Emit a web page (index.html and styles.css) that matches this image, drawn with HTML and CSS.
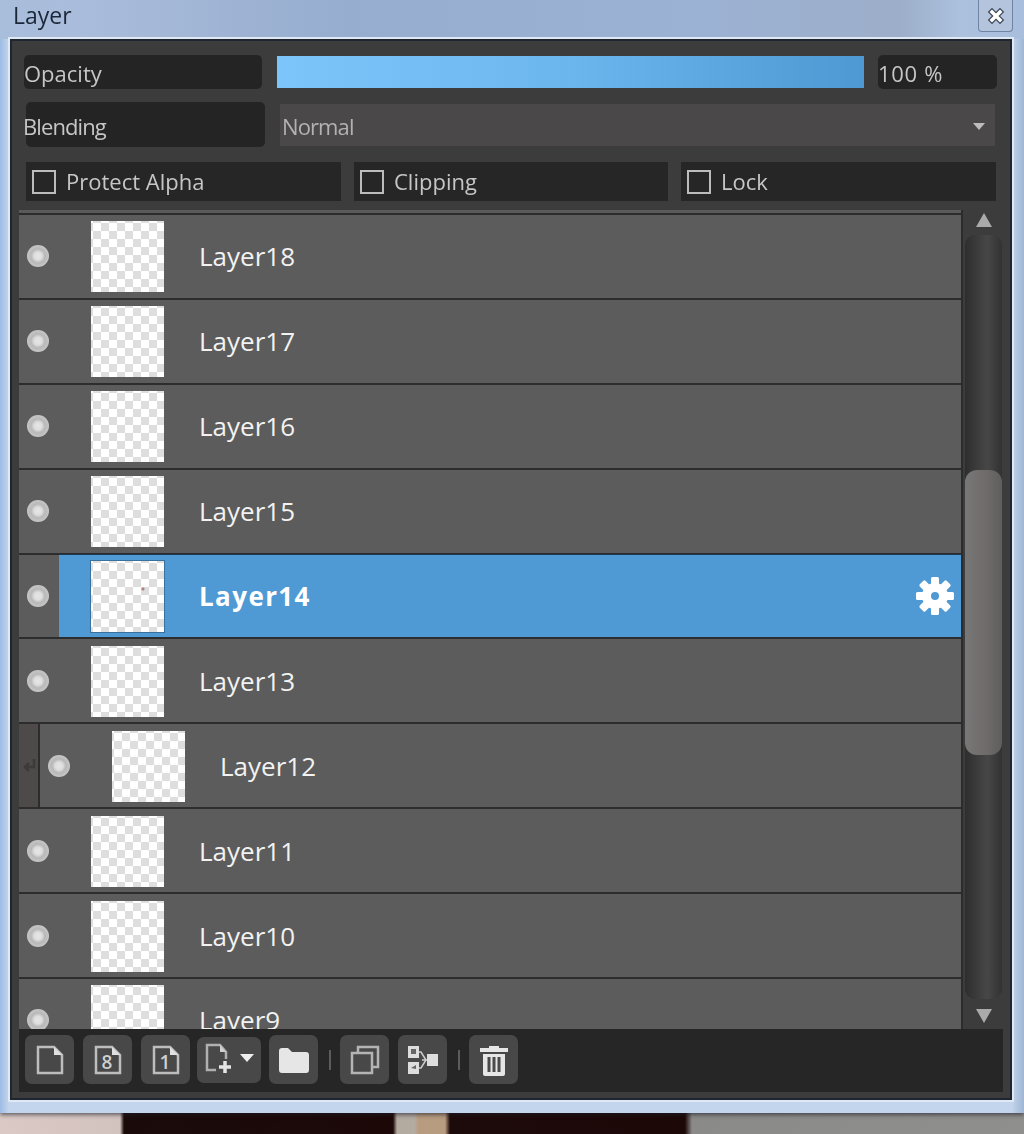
FILE: index.html
```html
<!DOCTYPE html>
<html lang="en">
<head>
<meta charset="utf-8">
<title>Layer</title>
<link rel="stylesheet" href="styles.css">
</head>
<body>
<div class="window">
  <header class="titlebar">
    <span class="title">Layer</span>
    <button class="close" aria-label="Close">
      <svg width="18" height="18" viewBox="0 0 18 18"><path d="M5 5l8 8M13 5l-8 8" stroke="#3b4658" stroke-width="6" stroke-linecap="square"/><path d="M5 5l8 8M13 5l-8 8" stroke="#fff" stroke-width="3.500" stroke-linecap="square"/></svg>
    </button>
  </header>
  <main class="panel">
    <section class="controls">
      <div class="row-opacity">
        <div class="label">Opacity</div>
        <div class="slider"></div>
        <div class="label value">100 %</div>
      </div>
      <div class="row-blending">
        <div class="label label-tight">Blending</div>
        <div class="select"><span>Normal</span><i class="caret"></i></div>
      </div>
      <div class="row-checks">
        <label class="check"><i class="box"></i>Protect Alpha</label>
        <label class="check"><i class="box"></i>Clipping</label>
        <label class="check"><i class="box"></i>Lock</label>
      </div>
    </section>
    <section class="stack">
      <div class="list">
        <div class="row-cut"></div>
        <div class="row"><div class="eye-cell"><i class="eye"></i></div><div class="body"><i class="thumb"></i><span class="name">Layer18</span></div></div>
        <div class="row"><div class="eye-cell"><i class="eye"></i></div><div class="body"><i class="thumb"></i><span class="name">Layer17</span></div></div>
        <div class="row"><div class="eye-cell"><i class="eye"></i></div><div class="body"><i class="thumb"></i><span class="name">Layer16</span></div></div>
        <div class="row"><div class="eye-cell"><i class="eye"></i></div><div class="body"><i class="thumb"></i><span class="name">Layer15</span></div></div>
        <div class="row selected"><div class="eye-cell"><i class="eye"></i></div><div class="body"><i class="thumb thumb-dot"></i><span class="name">Layer14</span>
          <svg class="gear" width="40" height="40" viewBox="0 0 40 40"><g fill="#fff"><circle cx="20" cy="20" r="13"/><rect x="16" y="1" width="8" height="38" rx="1.5"/><rect x="16" y="1" width="8" height="38" rx="1.5" transform="rotate(45 20 20)"/><rect x="16" y="1" width="8" height="38" rx="1.5" transform="rotate(90 20 20)"/><rect x="16" y="1" width="8" height="38" rx="1.5" transform="rotate(135 20 20)"/></g><circle cx="20" cy="20" r="4" fill="#4f9ad4"/></svg>
        </div></div>
        <div class="row"><div class="eye-cell"><i class="eye"></i></div><div class="body"><i class="thumb"></i><span class="name">Layer13</span></div></div>
        <div class="row"><div class="indent"><svg width="16" height="18" viewBox="0 0 16 18"><path d="M13 2v8H5M8 6l-4 4 4 4" fill="none" stroke="#3f3a3a" stroke-width="2.500"/></svg></div><div class="eye-cell"><i class="eye"></i></div><div class="body"><i class="thumb"></i><span class="name">Layer12</span></div></div>
        <div class="row"><div class="eye-cell"><i class="eye"></i></div><div class="body"><i class="thumb"></i><span class="name">Layer11</span></div></div>
        <div class="row"><div class="eye-cell"><i class="eye"></i></div><div class="body"><i class="thumb"></i><span class="name">Layer10</span></div></div>
        <div class="row"><div class="eye-cell"><i class="eye"></i></div><div class="body"><i class="thumb"></i><span class="name">Layer9</span></div></div>
      </div>
      <div class="scrollbar">
        <i class="arrow-up"></i>
        <div class="track"><div class="grip"></div></div>
        <i class="arrow-down"></i>
      </div>
    </section>
    <footer class="toolbar">
      <button class="tool"><svg width="30" height="32" viewBox="0 0 30 32"><path d="M3 3h16l8 8v18H3z" fill="none" stroke="#bdbdbd" stroke-width="2.500"/><path d="M19 3v8h8z" fill="#e0e0e0"/></svg></button>
      <button class="tool"><svg width="30" height="32" viewBox="0 0 30 32"><path d="M3 3h16l8 8v18H3z" fill="none" stroke="#bdbdbd" stroke-width="2.500"/><path d="M19 3v8h8z" fill="#e0e0e0"/><text x="14" y="25" text-anchor="middle" class="glyph">8</text></svg></button>
      <button class="tool"><svg width="30" height="32" viewBox="0 0 30 32"><path d="M3 3h16l8 8v18H3z" fill="none" stroke="#bdbdbd" stroke-width="2.500"/><path d="M19 3v8h8z" fill="#e0e0e0"/><text x="14" y="25" text-anchor="middle" class="glyph">1</text></svg></button>
      <button class="tool tool-wide"><svg width="32" height="36" viewBox="0 0 32 36"><path d="M12 28H3V3h13l6 7v7" fill="none" stroke="#b0b0b0" stroke-width="2.500"/><path d="M16 3v7h6z" fill="#d0d0d0"/><path d="M21 19v12M15 25h12" stroke="#e6e6e6" stroke-width="3.500"/></svg><i class="tool-caret"></i></button>
      <button class="tool"><svg width="32" height="26" viewBox="0 0 32 26"><path d="M1 4a3 3 0 0 1 3-3h6l4 4h14a3 3 0 0 1 3 3v15a3 3 0 0 1-3 3H4a3 3 0 0 1-3-3z" fill="#e6e6e6"/></svg></button>
      <i class="sep"></i>
      <button class="tool"><svg width="30" height="30" viewBox="0 0 30 30"><path d="M8 7V2h20v20h-6" fill="none" stroke="#b4b4b4" stroke-width="2.500"/><rect x="2" y="8" width="20" height="20" fill="none" stroke="#b4b4b4" stroke-width="2.500"/></svg></button>
      <button class="tool"><svg width="32" height="30" viewBox="0 0 32 30"><rect x="1" y="1" width="11" height="12" fill="#ddd"/><rect x="1" y="17" width="11" height="12" fill="#ddd"/><path d="M4 4h5v5H4zM4 23l5-3v4z" fill="#666"/><path d="M12 7h2l5 8-5 8h-2M15 15h5" fill="none" stroke="#ccc" stroke-width="1.500"/><rect x="20" y="9" width="11" height="12" fill="#ddd"/></svg></button>
      <i class="sep"></i>
      <button class="tool"><svg width="30" height="32" viewBox="0 0 30 32"><path d="M10 2h10v3H10z" fill="#e6e6e6"/><path d="M1 4h28v4H1z" fill="#e6e6e6"/><path d="M4 10h22v20a2 2 0 0 1-2 2H6a2 2 0 0 1-2-2z" fill="#e6e6e6"/><path d="M8.500 13h3v15h-3zM13.500 13h3v15h-3zM18.500 13h3v15h-3z" fill="#4a4a4a"/></svg></button>
    </footer>
  </main>
</div>
<div class="backdrop"></div>
</body>
</html>
```

FILE: styles.css
```css
* { box-sizing: border-box; }
html, body { margin: 0; height: 100%; }
body {
  width: 1024px;
  height: 1134px;
  overflow: hidden;
  display: flex;
  flex-direction: column;
  font-family: "Open Sans", "Noto Sans", sans-serif;
  background: #8f8f8d;
}
i { display: block; font-style: normal; }

.window {
  flex: none;
  height: 1113px;
  display: flex;
  flex-direction: column;
  padding: 0 12px 13px 10px;
  background:
    linear-gradient(90deg, #9dbce4 0, #c4d6ec 9px, transparent 10px, transparent 1012px, #bfd1e8 1013px, #9fb6d6 1024px),
    linear-gradient(180deg, #9db3d6 0, #a0b5d6 38px, #c3d5ec 1100px);
  box-shadow: 0 2px 4px rgba(30, 30, 40, .6);
  position: relative;
  filter: blur(.6px);
}
.titlebar {
  flex: none;
  height: 39px;
  margin: 0 -12px 0 -10px;
  padding: 0 11px 0 13px;
  display: flex;
  justify-content: space-between;
  align-items: flex-start;
  background: linear-gradient(90deg, #a8bedb 0, #aabcdb 80px, #96adcf 350px, #9cb2d4 700px, #9caec9 900px, #abc1de 960px, #a9bedc 1024px);
}
.title {
  font-size: 23px;
  line-height: 30px;
  color: #1b2738;
}
.close {
  width: 35px;
  height: 32px;
  margin: 0;
  padding: 0;
  border: 1px solid #6f83a3;
  border-top: 0;
  border-radius: 0 0 4px 4px;
  background: #b4c4dc;
  display: flex;
  align-items: center;
  justify-content: center;
}

.panel {
  flex: 1;
  min-height: 0;
  display: flex;
  flex-direction: column;
  padding: 14px 7px 6px;
  background: #3d3c3c;
  border: 2px solid #1e2731;
  box-shadow: 0 0 0 2px #dfe8f3;
}
.controls { flex: none; padding-left: 5px; font-size: 22px; color: #c6c6c6; }
.row-opacity {
  display: grid;
  grid-template-columns: 238px 587px 118px;
  column-gap: 15px;
  height: 34px;
}
.label {
  display: flex;
  align-items: center;
  padding-top: 2px;
  background: #252424;
  border-radius: 5px;
  line-height: 1;
}
.value { margin-left: -1px; letter-spacing: .7px; }
.slider {
  margin: 1px 0;
  background: linear-gradient(90deg, #7cc5fb 0, #6cb6ee 50%, #4e98d3 100%);
}
.row-blending {
  display: grid;
  grid-template-columns: 239px 715px;
  column-gap: 15px;
  height: 45px;
  margin: 13px 0 0 2px;
}
.label-tight {
  display: block;
  padding-top: 13px;
  text-indent: -3px;
  letter-spacing: -.9px;
}
.select {
  margin: 2px 0 1px;
  padding: 2px 2px 0 2px;
  display: flex;
  align-items: center;
  justify-content: space-between;
  background: #4a4848;
  color: #b2b2b2;
  letter-spacing: -.9px;
}
.caret {
  width: 0;
  height: 0;
  margin-right: 8px;
  border: 6px solid transparent;
  border-top: 7px solid #bdbdbd;
  border-bottom: 0;
}
.row-checks {
  display: grid;
  grid-template-columns: 315px 314px 315px;
  column-gap: 13px;
  height: 39px;
  margin: 15px 0 9px 2px;
}
.check {
  display: flex;
  align-items: center;
  padding: 0 0 2px 6px;
  background: #272626;
}
.box {
  width: 24px;
  height: 24px;
  margin: 2px 10px 0 0;
  border: 2px solid #bcbcbc;
}

.stack {
  flex: none;
  height: 819px;
  display: flex;
}
.list {
  flex: none;
  width: 944px;
  overflow: hidden;
  border-right: 2px solid #2c2c2c;
}
.row-cut {
  height: 5px;
  background: #5a5a5a;
  border-bottom: 2px solid #2b2b2b;
}
.row {
  display: flex;
  height: 84.9px;
  background: #5c5c5c;
  border-bottom: 2px solid #2d2d2d;
  color: #f2f2f2;
  font-size: 26px;
}
.indent {
  flex: none;
  width: 21px;
  display: flex;
  align-items: center;
  justify-content: center;
  background: #4f4a4a;
  border-right: 2px solid #2c2c2c;
}
.eye-cell {
  flex: none;
  width: 40px;
  display: flex;
  align-items: center;
  padding-left: 8px;
}
.eye {
  width: 22px;
  height: 22px;
  border-radius: 50%;
  background: radial-gradient(circle, #e6e6e6 0, #dedede 25%, #b8b8b8 45%, #cfcfcf 85%, #a8a8a8 100%);
}
.body {
  flex: 1;
  min-width: 0;
  display: flex;
  align-items: center;
  padding-left: 32px;
}
.thumb {
  flex: none;
  width: 73px;
  height: 71px;
  margin: 1px 35px 0 0;
  background:
    conic-gradient(#dedede 25%, #fff 0 50%, #dedede 0 75%, #fff 0) 2px 2px / 16px 16px;
}
.thumb-dot {
  background:
    radial-gradient(circle 2px at 52px 28px, #b08080 0, #b08080 1px, transparent 2px),
    conic-gradient(#dedede 25%, #fff 0 50%, #dedede 0 75%, #fff 0) 2px 2px / 16px 16px;
  box-shadow: 0 0 0 1px rgba(47, 95, 136, .7);
}
.name { line-height: 1; }
.selected .body {
  background: #4f9ad4;
  border-top: 1px solid #1b3850;
  margin-top: -1px;
}
.selected .name { font-weight: 700; color: #fff; letter-spacing: 1.4px; }
.gear { margin: 0 6px 0 auto; }

.scrollbar {
  flex: 1;
  display: flex;
  flex-direction: column;
  align-items: center;
  padding: 3px 1px 6px 2px;
}
.arrow-up, .arrow-down {
  flex: none;
  width: 0;
  height: 0;
  border-left: 8px solid transparent;
  border-right: 8px solid transparent;
}
.arrow-up { border-bottom: 14px solid #aaa; }
.arrow-down { border-top: 14px solid #aaa; }
.track {
  flex: 1;
  align-self: stretch;
  margin: 8px 0 10px;
  padding-top: 235px;
  border-radius: 10px;
  background: linear-gradient(90deg, #2e2e2e, #474747 60%, #323232);
}
.grip {
  height: 285px;
  border-radius: 12px;
  background: linear-gradient(90deg, #787878, #6e6a68 60%, #5e5e5e);
}

.toolbar {
  flex: none;
  height: 63px;
  display: flex;
  align-items: center;
  gap: 9px;
  padding: 0 0 2px 6px;
  background: #262626;
}
.tool {
  flex: none;
  width: 49px;
  height: 49px;
  margin: 0;
  padding: 0;
  border: 0;
  border-radius: 7px;
  background: #484848;
  display: flex;
  align-items: center;
  justify-content: center;
}
.tool-wide { width: 64px; height: 46px; gap: 4px; margin: 0 -1px 0 -2px; }
.tool-caret {
  width: 0;
  height: 0;
  border: 7px solid transparent;
  border-top: 8px solid #eee;
  border-bottom: 0;
  margin-top: -4px;
}
.sep {
  flex: none;
  width: 2px;
  height: 20px;
  margin-left: 2px;
  background: #5c5c5c;
}
.glyph {
  font-family: "Open Sans", sans-serif;
  font-size: 19px;
  font-weight: 600;
  fill: #cfcfcf;
}

.backdrop {
  flex: 1;
  background: linear-gradient(90deg,
    #dac9c5 0, #d3c3bf 120px, #1a0b0b 124px, #1d0808 393px, #b3aaa0 397px, #b3aaa0 415px,
    #b89c80 418px, #b89c80 445px, #1d0a0a 450px, #1d0808 685px, #8a8a88 692px, #8f8f8d 1024px);
}
```
